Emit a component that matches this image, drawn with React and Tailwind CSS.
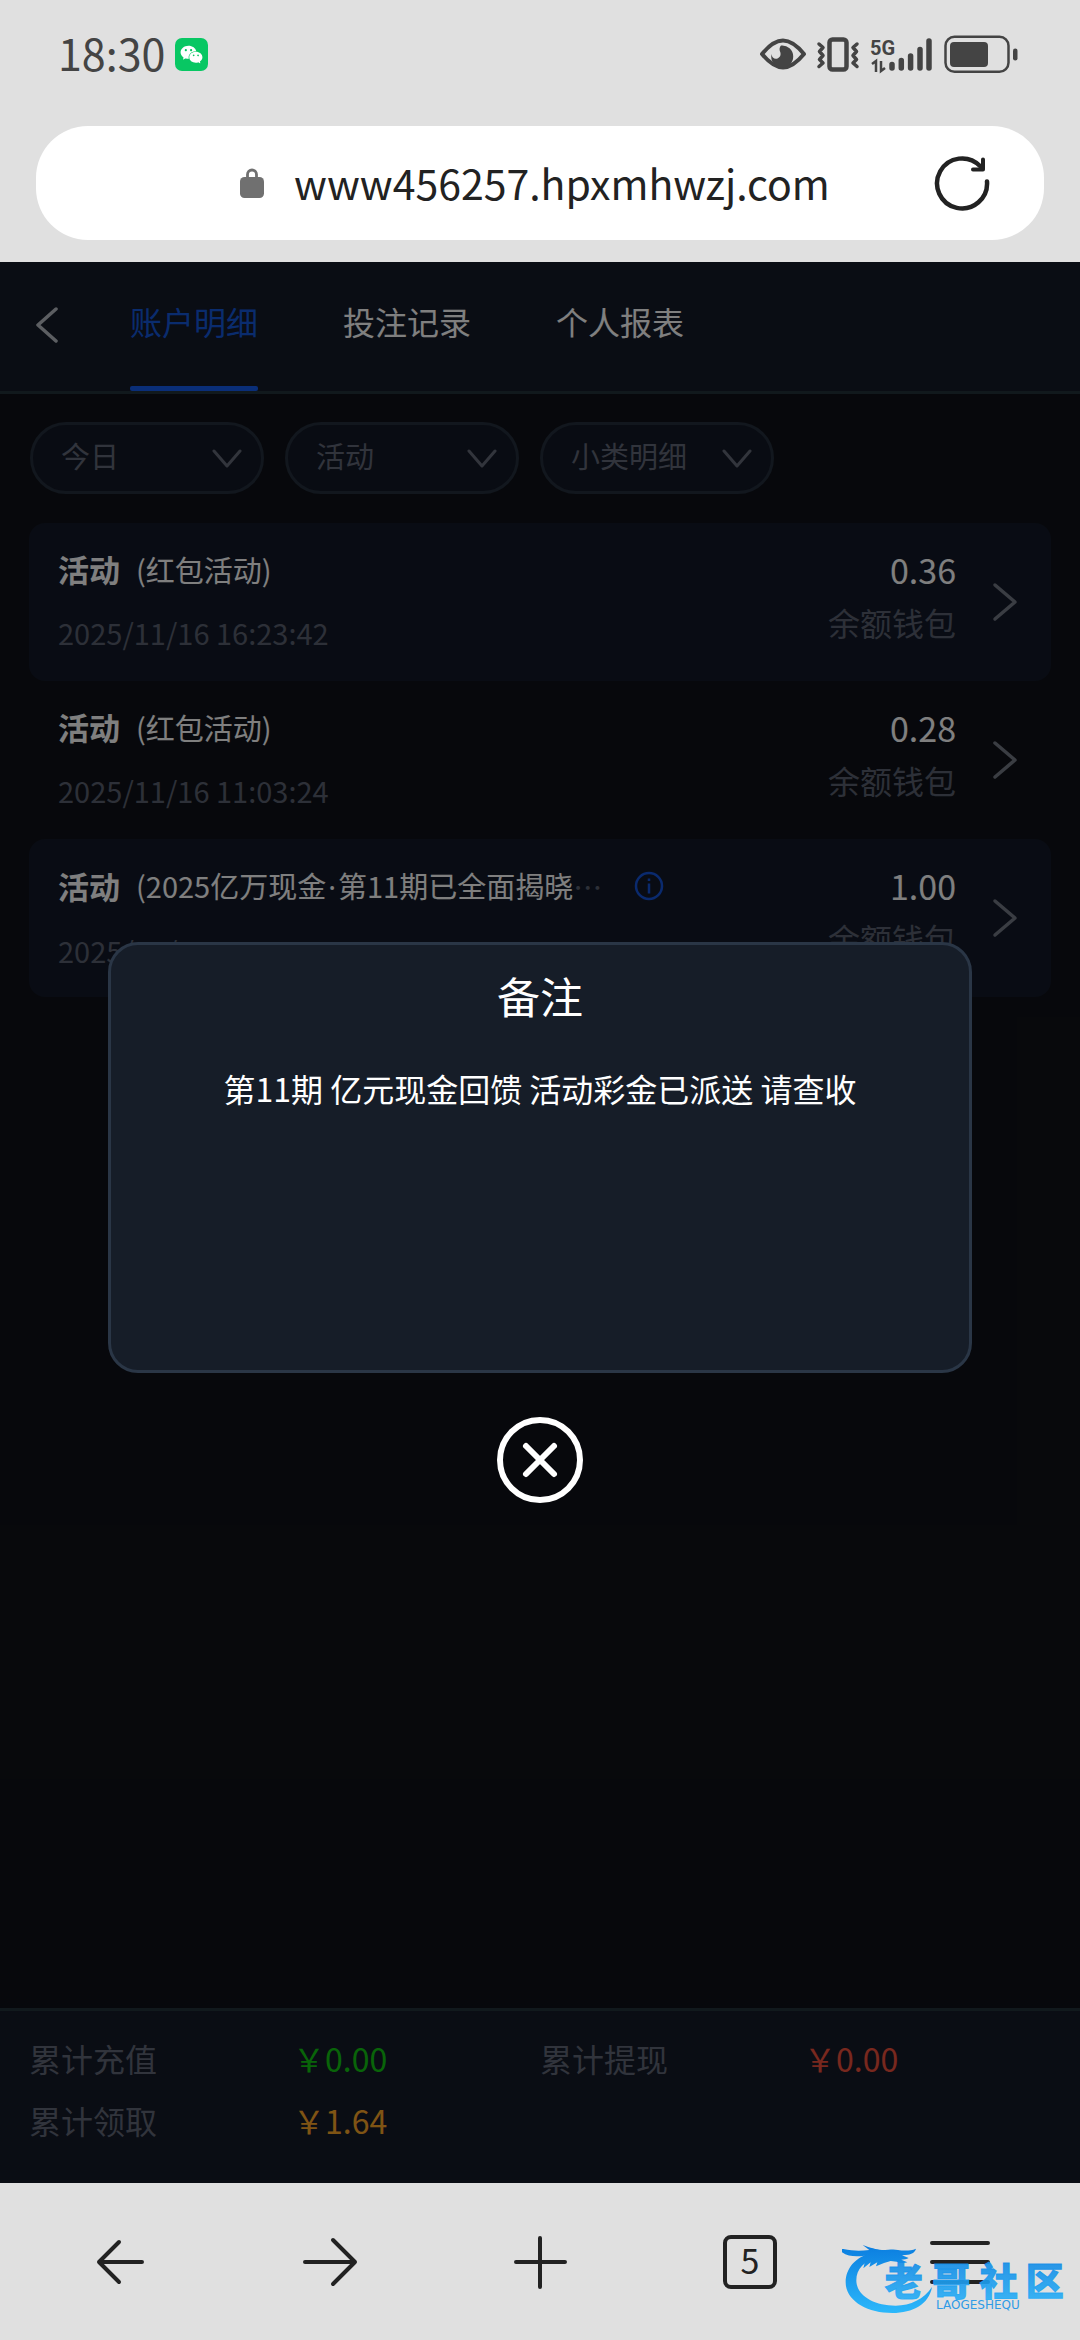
import React from "react";
import { AiFillWechat } from "react-icons/ai";

const filters = [
  { id: "date", label: "日期", value: "今日" },
  { id: "type", label: "类型", value: "活动" },
  { id: "detail", label: "小类", value: "小类明细" },
];

const records = [
  { name: ["(红包活动)"], date: "2025/11/16 16:23:42", amount: "0.36" },
  { name: ["(红包活动)"], date: "2025/11/16 11:03:24", amount: "0.28" },
  {
    name: ["(2025亿万现金", "第11期已全面揭晓"],
    more: true,
    date: "2025/11/16 10:12:08",
    amount: "1.00",
  },
];

function StatusBar() {
  return (
    <div className="flex h-[108px] items-center justify-between pr-[59px] pl-[58px] text-[#444]">
      <div className="flex items-center gap-[10px]">
        <span className="pb-1 text-[43px] leading-none">18:30</span>
        <span className="flex size-[33px] items-center justify-center rounded-[7px] bg-[#08c763]">
          <AiFillWechat className="size-[25px] text-white" />
        </span>
      </div>
      <svg width="262" height="40" viewBox="0 0 262 40" fill="none" aria-hidden="true">
        {/* eye */}
        <path d="M3 20C12 9 19 6.500 24 6.500S36 9 45 20C36 31 29 33.500 24 33.500S12 31 3 20Z" stroke="#444" strokeWidth="4" strokeLinejoin="round" />
        <path d="M22 11.500a11 11 0 1 1-9.500 8.500c0 4 3.500 5.500 6 4.500 3.500-1.500 3.500-5 2.500-7-.800-2-.500-4.500 1-6Z" fill="#444" />
        {/* vibrate */}
        <rect x="70.500" y="5.500" width="17" height="30" rx="3" stroke="#444" strokeWidth="4.500" />
        <path d="M60 10l4 3.500-3.500 4 3.500 4-3.500 4 3.500 3.500-4 3.500M98 10l-4 3.500 3.500 4-3.500 4 3.500 4-3.500 3.500 4 3.500" stroke="#444" strokeWidth="3.500" strokeLinecap="round" strokeLinejoin="round" />
        {/* signal */}
        <text x="111" y="20.500" fontSize="20" fontWeight="700" fontFamily="Roboto, sans-serif" fill="#444">5G</text>
        <path d="M113 30l4-3v11M122 27v10l4-3" stroke="#444" strokeWidth="2.500" />
        <g stroke="#444" strokeWidth="5.500" strokeLinecap="round">
          <path d="M133 30.500v3.500M142.300 26.500v7.500M151.600 22v12M161 15.500V34M170 7v27" />
        </g>
        {/* battery */}
        <rect x="186.500" y="2.800" width="63" height="35" rx="9" stroke="#444" strokeWidth="2.500" />
        <rect x="191" y="8" width="38" height="25" rx="4" fill="#444" />
        <rect x="254" y="14.500" width="4.500" height="12" rx="2.200" fill="#444" />
      </svg>
    </div>
  );
}

function AddressBar() {
  return (
    <div className="mx-9 mt-[18px] mb-[22px] flex h-[114px] items-center rounded-[52px] bg-white pr-[54px] pl-[204px]">
      <svg width="24" height="30" viewBox="0 0 24 30" className="shrink-0" aria-hidden="true">
        <path d="M7.500 11V6.500a4.500 4.500 0 0 1 9 0V11" fill="none" stroke="#707070" strokeWidth="2.800" />
        <rect y="9" width="24" height="21" rx="4.500" fill="#707070" />
      </svg>
      <input
        type="text"
        aria-label="网址"
        defaultValue="www456257.hpxmhwzj.com"
        className="ml-[30px] min-w-0 flex-1 bg-transparent pb-[3px] text-[41px] leading-[60px] text-[#222] outline-none"
      />
      <button type="button" aria-label="刷新" className="shrink-0">
        <svg width="56" height="56" viewBox="0 0 56 56" fill="none" stroke="#222" strokeLinecap="round" strokeLinejoin="round" aria-hidden="true">
          <path d="M53 26.500A25 25 0 1 1 46 11" strokeWidth="4.500" />
          <path d="M49 4.500V14.500H39" strokeWidth="4" />
        </svg>
      </button>
    </div>
  );
}

function Header() {
  return (
    <header className="flex h-[132px] items-stretch border-b-[3px] border-[#23323a] bg-[#141a28] pl-9">
      <button type="button" aria-label="返回" className="flex w-[94px] items-center pb-1">
        <svg width="22" height="36" viewBox="0 0 22 36" fill="none" stroke="#b8bcc4" strokeWidth="3.500" strokeLinecap="round" strokeLinejoin="round" aria-hidden="true">
          <path d="M20 2L2 18l18 16" />
        </svg>
      </button>
      <nav className="flex gap-[85px] text-[32px] leading-[48px] text-white">
        <button type="button" className="flex flex-col justify-between pt-[35px] text-[#1458dc]">
          账户明细
          <span className="h-[5px] w-full rounded-[2px] bg-[#145cf0]" />
        </button>
        <button type="button" className="flex flex-col pt-[35px]">投注记录</button>
        <button type="button" className="flex flex-col pt-[35px]">个人报表</button>
      </nav>
    </header>
  );
}

function Filters() {
  return (
    <div className="flex gap-[21px] px-[30px] pt-7">
      {filters.map((f) => (
        <div key={f.id} className="relative w-[234px]">
          <select
            aria-label={f.label}
            defaultValue={f.value}
            className="h-[72px] w-full appearance-none rounded-full border-[3px] border-[#242e3c] bg-[#131826] px-7 pb-[5px] text-[29px] text-[#626878]"
          >
            <option>{f.value}</option>
          </select>
          <svg width="30" height="20" viewBox="0 0 30 20" className="pointer-events-none absolute top-[27px] right-[22px]" fill="none" stroke="#646a78" strokeWidth="3" strokeLinecap="round" strokeLinejoin="round" aria-hidden="true">
            <path d="M2 2l13 15L28 2" />
          </svg>
        </div>
      ))}
    </div>
  );
}

function RecordRow({ record }) {
  return (
    <li className="flex h-[158px] items-start rounded-2xl pr-[33px] pl-[29px] odd:bg-[#131928]">
      <div className="flex-1 pt-[22px]">
        <div className="flex items-center leading-[48px] text-white">
          <b className="mr-4 text-[31px] font-bold">活动</b>
          <span className="text-[29px]">
            {record.name.map((part, i) => (
              <React.Fragment key={part}>
                {i > 0 && <span className="mx-[2px] font-['Noto_Sans']">·</span>}
                {part}
              </React.Fragment>
            ))}
          </span>
          {record.more && <span className="text-[29px] text-[#5a6070]">…</span>}
          {record.more && (
            <button type="button" aria-label="备注" className="ml-8">
              <svg width="30" height="30" viewBox="0 0 30 30" fill="none" stroke="#1454dc" strokeWidth="2.500" aria-hidden="true">
                <circle cx="15" cy="15" r="13" />
                <path d="M15 12.500v10M15 7.500v2.500" />
              </svg>
            </button>
          )}
        </div>
        <time className="mt-[19px] block text-[29px] leading-10 text-[#5a6070]">{record.date}</time>
      </div>
      <div className="pt-[23px] text-right">
        <div className="text-[34px] leading-[48px] text-white">{record.amount}</div>
        <div className="mt-2 text-[32px] leading-10 text-[#5a6070]">余额钱包</div>
      </div>
      <svg width="26" height="40" viewBox="0 0 26 40" className="ml-9 shrink-0 self-center" fill="none" stroke="#747a86" strokeWidth="3.500" strokeLinecap="round" strokeLinejoin="round" aria-hidden="true">
        <path d="M3 3l20 17L3 37" />
      </svg>
    </li>
  );
}

function Summary() {
  return (
    <footer className="mt-auto border-t-[3px] border-[#23323a] bg-[#141a28] px-[29px] pt-4 pb-8 text-[32px] leading-[62px] text-[#626878]">
      <dl className="grid grid-cols-2">
        <div className="flex">
          <dt className="w-[264px]">累计充值</dt>
          <dd className="text-[#12c812]">￥0.00</dd>
        </div>
        <div className="flex">
          <dt className="w-[264px]">累计提现</dt>
          <dd className="text-[#f0503c]">￥0.00</dd>
        </div>
        <div className="flex">
          <dt className="w-[264px]">累计领取</dt>
          <dd className="text-[#ffa828]">￥1.64</dd>
        </div>
      </dl>
    </footer>
  );
}

function RemarkDialog() {
  return (
    <div className="absolute inset-0 flex flex-col items-center justify-center gap-11 bg-black/50">
      <section
        role="dialog"
        aria-modal="true"
        aria-labelledby="remark-title"
        className="min-h-[431px] w-4/5 rounded-[30px] border-[3px] border-[#2a3646] bg-[#161d28] px-8 pt-[19px] text-center text-white"
      >
        <h2 id="remark-title" className="text-[43px] leading-[62px]">备注</h2>
        <p className="mt-[38px] text-[32px] leading-[48px]">第11期 亿元现金回馈 活动彩金已派送 请查收</p>
      </section>
      <button type="button" aria-label="关闭">
        <svg width="86" height="86" viewBox="0 0 86 86" fill="none" stroke="#fff" strokeLinecap="round" aria-hidden="true">
          <circle cx="43" cy="43" r="40" strokeWidth="6" />
          <path d="M29 29l28 28M57 29L29 57" strokeWidth="6" />
        </svg>
      </button>
    </div>
  );
}

function Watermark() {
  return (
    <svg className="pointer-events-none absolute right-[13px] bottom-[24px]" width="225" height="76" viewBox="120 120 675 228" role="img" aria-label="老哥社区">
      <defs>
        <linearGradient id="wm" x1="0" y1="140" x2="0" y2="340" gradientUnits="userSpaceOnUse">
          <stop offset="0" stopColor="#0c7fe0" />
          <stop offset="1" stopColor="#2cb8fb" />
        </linearGradient>
      </defs>
      <g fill="url(#wm)">
        <path d="M212 158C160 170 131 205 131 247c0 54 62 92 140 92 62 0 110-26 119-78-24 36-64 56-109 56-68 0-118-32-118-76 0-32 22-60 72-72Z" />
        <path d="M124 147c30 6 50 6 78 3l-20-15c24 9 40 13 58 15 20 0 34-4 48 0 14 2 36 4 54-4-4 12-12 16-24 18l-18 2 20 8c-6 4-14 5-22 5l18 8c-10 4-22 2-32-2l-18-2-20 6-24 10 4-12-24 14 4-14-22 18 4-16-16 14c0-16 6-28 16-36-26 4-60 4-78-20Z" />
        <text y="284" fontSize="114" fontWeight="900" fontFamily="Noto Sans CJK SC, sans-serif" fillOpacity="0.9" stroke="url(#wm)" strokeOpacity="0.9" strokeWidth="3">
          <tspan x="248">老</tspan>
          <tspan x="391">哥</tspan>
          <tspan x="533">社</tspan>
          <tspan x="671">区</tspan>
        </text>
      </g>
      <text x="402" y="328" fontSize="36" fontFamily="DejaVu Sans, sans-serif" fill="#2f9be6">LAOGESHEQU</text>
    </svg>
  );
}

function NavIcon({ label, children }) {
  return (
    <button type="button" aria-label={label} className="flex items-center justify-center">
      <svg width="64" height="64" viewBox="0 0 64 64" fill="none" stroke="#222" strokeWidth="4" strokeLinecap="round" strokeLinejoin="round" aria-hidden="true">
        {children}
      </svg>
    </button>
  );
}

function BrowserNav() {
  return (
    <div className="relative h-[157px] bg-[#e0e0e0] px-[15px]">
      <nav className="grid h-full grid-cols-5">
        <NavIcon label="后退">
          <path d="M54 32H11M31 12L11 32l20 20" />
        </NavIcon>
        <NavIcon label="前进">
          <path d="M7 32h50M35 10l22 22-22 22" />
        </NavIcon>
        <NavIcon label="新建">
          <path d="M32 8v49M8 32h49" />
        </NavIcon>
        <button type="button" aria-label="标签页" className="flex items-center justify-center">
          <span className="flex size-[54px] items-center justify-center rounded-lg border-4 border-[#222] pb-1 text-[34px] leading-none text-[#222]">5</span>
        </button>
        <NavIcon label="菜单">
          <path d="M4 13h56M4 32h56M4 52h56" />
        </NavIcon>
      </nav>
      <Watermark />
    </div>
  );
}

export default function App() {
  return (
    <div lang="zh-CN" className="flex min-h-screen flex-col bg-[#e0e0e0] font-['Noto_Sans_CJK_SC',sans-serif]">
      <StatusBar />
      <AddressBar />
      <main className="relative flex flex-1 flex-col bg-[#0f1118]">
        <Header />
        <Filters />
        <ul className="mx-[29px] mt-[29px]">
          {records.map((r) => (
            <RecordRow key={r.date} record={r} />
          ))}
        </ul>
        <Summary />
        <RemarkDialog />
      </main>
      <BrowserNav />
    </div>
  );
}
